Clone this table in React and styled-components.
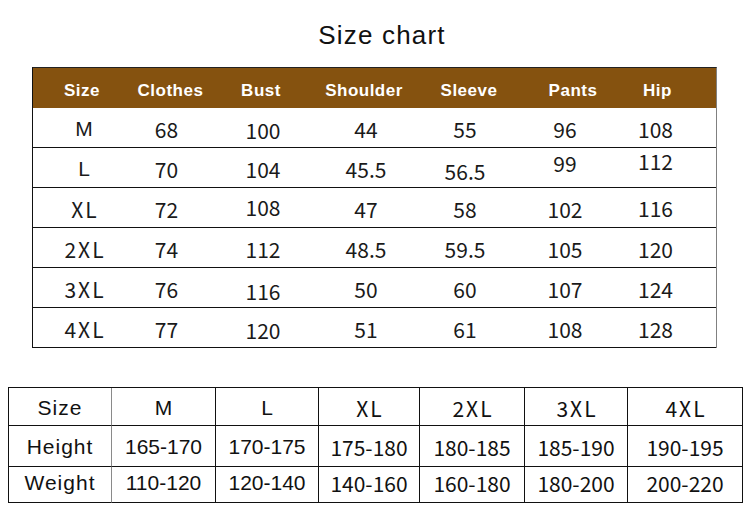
import React from 'react';
import styled, { createGlobalStyle } from 'styled-components';

const GlobalStyle = createGlobalStyle`
  html, body {
    margin: 0;
    padding: 0;
    background: #fff;
  }
  body {
    width: 750px;
    height: 527px;
    overflow: hidden;
    font-family: "Liberation Sans", Arial, sans-serif;
    color: #111;
  }
  * { box-sizing: border-box; }
`;

const ARIAL = `"Liberation Sans", Arial, sans-serif`;
const CJK = `"Noto Sans CJK SC", "Noto Sans", sans-serif`;

const headers = [
  { label: 'Size', dx: -2 },
  { label: 'Clothes', dx: 4 },
  { label: 'Bust', dx: -2 },
  { label: 'Shoulder', dx: -2 },
  { label: 'Sleeve', dx: 4 },
  { label: 'Pants', dx: 8 },
  { label: 'Hip', dx: 2 },
];

// dy = small vertical drift of a value, as in the original image
const rows = [
  ['M', '68', { v: '100', dy: 1 }, '44', '55', '96', '108'],
  ['L', '70', '104', '45.5', { v: '56.5', dy: 2 }, { v: '99', dy: -6 }, { v: '112', dy: -8 }],
  ['XL', '72', { v: '108', dy: -2 }, '47', '58', '102', { v: '116', dy: -1 }],
  ['2XL', '74', '112', '48.5', '59.5', '105', '120'],
  ['3XL', '76', { v: '116', dy: 2 }, '50', '60', '107', '124'],
  ['4XL', '77', { v: '120', dy: 1 }, '51', '61', '108', '128'],
];

const fitSizes = ['M', 'L', 'XL', '2XL', '3XL', '4XL'];
const fitRows = [
  { label: 'Height', values: ['165-170', '170-175', '175-180', '180-185', '185-190', '190-195'] },
  { label: 'Weight', values: ['110-120', '120-140', '140-160', '160-180', '180-200', '200-220'] },
];

const isXL = (s) => s.includes('XL');

export default function App() {
  return (
    <Page>
      <GlobalStyle />
      <Title>Size chart</Title>

      <Chart>
        <HeadRow>
          {headers.map((h) => (
            <HeadCell key={h.label} $dx={h.dx}>{h.label}</HeadCell>
          ))}
        </HeadRow>
        {rows.map((row, i) => (
          <DataRow key={i}>
            {row.map((c, j) => {
              const v = typeof c === 'string' ? c : c.v;
              const dy = typeof c === 'string' ? 0 : c.dy;
              return (
                <DataCell key={j} $dy={dy} $xl={isXL(v)} $latin={v === 'M' || v === 'L'}>
                  {v}
                </DataCell>
              );
            })}
          </DataRow>
        ))}
      </Chart>

      <FitTable>
        <FitCell $row={0} $first>Size</FitCell>
        {fitSizes.map((s) => (
          <FitCell key={s} $row={0} $cjk={isXL(s)} $xl={isXL(s)}>{s}</FitCell>
        ))}
        {fitRows.map((r, i) => (
          <React.Fragment key={r.label}>
            <FitCell $row={i + 1} $first>{r.label}</FitCell>
            {r.values.map((v, j) => (
              <FitCell key={v + j} $row={i + 1} $cjk={j >= 2}>{v}</FitCell>
            ))}
          </React.Fragment>
        ))}
      </FitTable>
    </Page>
  );
}

const Page = styled.div`
  width: 750px;
  height: 527px;
  padding-top: 20px;
  display: flex;
  flex-direction: column;
  align-items: flex-start;
`;

const Title = styled.h1`
  align-self: stretch;
  margin: 0;
  padding-left: 14px;
  text-align: center;
  font-family: ${ARIAL};
  font-weight: 400;
  font-size: 26px;
  line-height: 30px;
  letter-spacing: 1.2px;
  color: #111;
`;

const TRACKS = '84px 81px 112px 94px 104px 96px 85px';

const Chart = styled.div`
  margin: 17px 0 0 32px;
  width: 685px;
  border-top: 1px solid #222;
  border-left: 1.5px solid #111;
  border-right: 1.5px solid #808080;
  display: flex;
  flex-direction: column;
`;

const HeadRow = styled.div`
  display: grid;
  grid-template-columns: ${TRACKS};
  height: 40px;
  padding-left: 9px;
  background: #85520f;
`;

const HeadCell = styled.div`
  display: flex;
  align-items: center;
  justify-content: center;
  padding-top: 6px;
  transform: translateX(${(p) => p.$dx}px);
  font-family: ${ARIAL};
  font-weight: 700;
  font-size: 17px;
  letter-spacing: 0.5px;
  color: #fff;
`;

const DataRow = styled.div`
  display: grid;
  grid-template-columns: ${TRACKS};
  height: 40px;
  padding-left: 9px;
  border-bottom: 1px solid #111;
`;

const DataCell = styled.div`
  display: flex;
  align-items: center;
  justify-content: center;
  padding-top: 3px;
  padding-left: ${(p) => (p.$xl ? '2px' : '0')};
  transform: translateY(${(p) => p.$dy}px);
  font-family: ${(p) => (p.$latin ? ARIAL : CJK)};
  font-size: 21px;
  letter-spacing: ${(p) => (p.$xl ? '2px' : '0')};
  color: #1a1a1a;
`;

const FitTable = styled.div`
  margin: 39px 0 0 8px;
  display: grid;
  grid-template-columns: 103px 104px 103px 101px 105px 103px 115px;
  grid-template-rows: 38px 41px 36px;
  border-top: 1px solid #111;
  border-left: 1px solid #111;
`;

const rowShift = [3, 1, -3];

const FitCell = styled.div`
  display: flex;
  align-items: center;
  justify-content: center;
  padding-top: ${(p) => Math.max(0, rowShift[p.$row])}px;
  padding-bottom: ${(p) => Math.max(0, -rowShift[p.$row])}px;
  padding-left: ${(p) => (p.$xl ? '2px' : '0')};
  border-right: 1px solid ${(p) => (p.$first ? '#8a8a8a' : '#111')};
  border-bottom: 1px solid #111;
  font-family: ${(p) => (p.$cjk ? CJK : ARIAL)};
  font-size: 21px;
  letter-spacing: ${(p) => (p.$xl ? '2px' : p.$first ? '1px' : '0')};
  color: #111;
`;
